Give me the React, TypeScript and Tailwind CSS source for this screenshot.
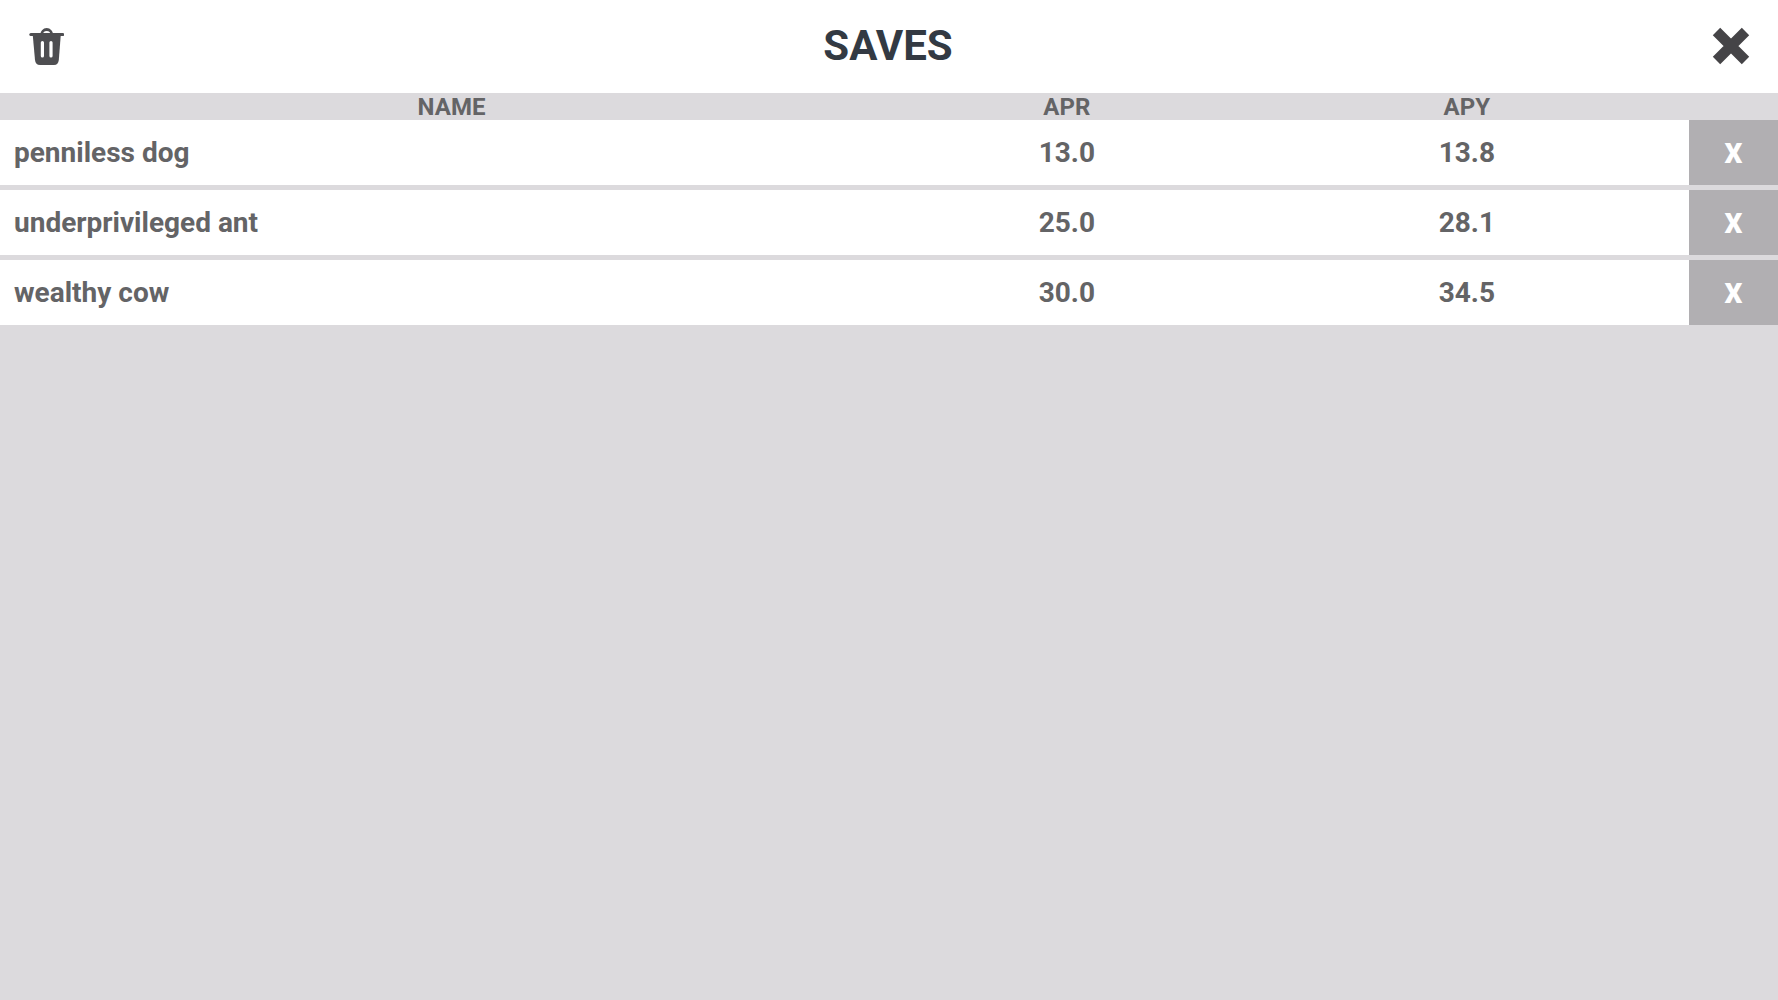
import { useState } from "react";

type Save = { name: string; apr: number; apy: number };

const SAVES: Save[] = [
  { name: "penniless dog", apr: 13, apy: 13.8 },
  { name: "underprivileged ant", apr: 25, apy: 28.1 },
  { name: "wealthy cow", apr: 30, apy: 34.5 },
];

function TrashIcon() {
  return (
    <svg viewBox="0 0 36 38" className="h-[38px] w-9" fill="none" aria-hidden="true">
      <path d="M13.5 8a5.200 5.500 0 0 1 10.400 0" stroke="#4e4e51" strokeWidth="2.800" />
      <path d="M2.800 7.500H34.700" stroke="#4e4e51" strokeWidth="3" strokeLinecap="round" />
      <path d="M4.700 7.500H32.800L30.800 33Q30.300 38 26 38H12Q7.500 38 7 33Z" fill="#4e4e51" />
      <path d="M14.400 15.500V29M23 15.500V29" stroke="#ffffff" strokeWidth="3.200" strokeLinecap="round" />
    </svg>
  );
}

function CloseIcon() {
  return (
    <svg viewBox="0 0 38 38" className="h-[38px] w-[38px]" fill="none" aria-hidden="true">
      <path d="M4.500 4.500L33.500 33.500M33.500 4.500L4.500 33.500" stroke="#454447" strokeWidth="10.500" />
    </svg>
  );
}

export default function App() {
  const [saves, setSaves] = useState(SAVES);

  const remove = (name: string) => setSaves((prev) => prev.filter((s) => s.name !== name));

  return (
    <main className="min-h-screen bg-[#dcdadd] font-['Roboto',sans-serif] font-bold text-[#646466]">
      <header className="flex h-[93px] items-center justify-between bg-white px-7 pb-px">
        <button type="button" aria-label="Delete all saves" onClick={() => setSaves([])}>
          <TrashIcon />
        </button>
        <h1 className="text-[42px] leading-none text-[#333a43]">SAVES</h1>
        <button type="button" aria-label="Close">
          <CloseIcon />
        </button>
      </header>

      <table className="w-full table-fixed border-collapse">
        <thead>
          <tr className="text-2xl leading-[25px]">
            <th className="w-1/2 p-0 pt-0.5 pl-3.5">NAME</th>
            <th className="w-1/5 p-0 pt-0.5">APR</th>
            <th className="w-1/4 p-0 pt-0.5">APY</th>
            <th className="w-1/20 p-0 pt-0.5" aria-label="Remove" />
          </tr>
        </thead>
        <tbody className="text-[28px] leading-[65px]">
          {saves.map((save) => (
            <tr key={save.name} className="bg-white">
              <td className="border-b-[5px] border-[#dcdadd] p-0 pl-3.5">{save.name}</td>
              <td className="border-b-[5px] border-[#dcdadd] p-0 text-center">{save.apr.toFixed(1)}</td>
              <td className="border-b-[5px] border-[#dcdadd] p-0 text-center">{save.apy.toFixed(1)}</td>
              <td className="border-b-[5px] border-[#dcdadd] p-0">
                <button
                  type="button"
                  aria-label={`Remove ${save.name}`}
                  onClick={() => remove(save.name)}
                  className="block h-[65px] w-full bg-[#b1afb2] pt-px font-black text-white"
                >
                  X
                </button>
              </td>
            </tr>
          ))}
        </tbody>
      </table>
    </main>
  );
}
